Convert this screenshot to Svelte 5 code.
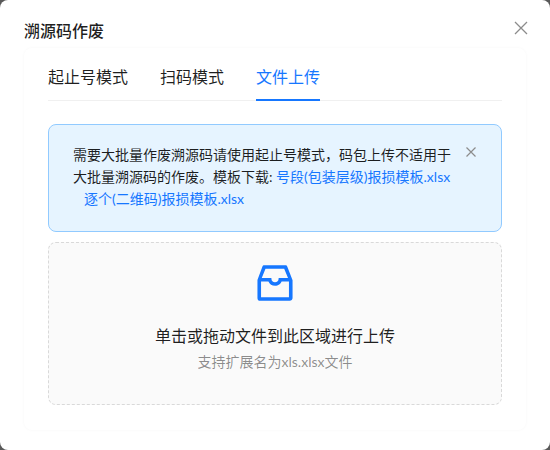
<script>
	let tabs = ['起止号模式', '扫码模式', '文件上传'];
	let active = $state(2);
	let showAlert = $state(true);
</script>

<div class="modal">
	<button class="close" aria-label="关闭">
		<svg viewBox="0 0 14 14" width="14" height="14"><path d="M1 1l12 12M13 1L1 13" /></svg>
	</button>
	<h2 class="title">溯源码作废</h2>
	<div class="card">
		<div class="tabs">
			{#each tabs as tab, i}
				<button class="tab" class:active={active === i} onclick={() => (active = i)}>{tab}</button>
			{/each}
		</div>

		{#if showAlert}
			<div class="alert">
				需要大批量作废溯源码请使用起止号模式，码包上传不适用于大批量溯源码的作废。模板下载:
				<a href="/#">号段(包装层级)报损模板.xlsx</a>
				<a class="second" href="/#">逐个(二维码)报损模板.xlsx</a>
				<button class="alertClose" aria-label="关闭提示" onclick={() => (showAlert = false)}>
					<svg viewBox="0 0 10 10" width="10" height="10"><path d="M.5.5l9 9M9.5.5l-9 9" /></svg>
				</button>
			</div>
		{/if}

		<div class="dragger">
			<svg class="inbox" viewBox="0 0 1024 1024" width="48" height="48">
				<path d="M885.2 446.3l-.2-.8-112.2-285.1c-5-16.1-19.9-27.2-36.8-27.2H281.2c-17 0-32.1 11.3-36.9 27.6L139.4 443l-.3.7-.2.8c-1.3 4.9-1.7 9.9-1 14.8-.1 1.6-.2 3.2-.2 4.8V830a60.9 60.9 0 0 0 60.8 60.8h627.2c33.5 0 60.8-27.3 60.9-60.8V464.1c0-1.3 0-2.6-.1-3.7.4-4.9 0-9.6-1.3-14.1zm-295.8-43l-.3 15.7c-.8 44.9-31.8 75.1-77.1 75.1-22.1 0-41.1-7.1-54.8-20.6S436 441.2 435.6 419l-.3-15.7H229.5L309 210h399.2l81.7 193.3H589.4zm-375 76.8h157.3c24.3 57.1 76 90.8 140.4 90.8 33.7 0 65-9.4 90.3-27.2 22.2-15.6 39.5-37.4 50.7-63.6h156.5V814H214.4V480.1z" />
			</svg>
			<p class="dragText">单击或拖动文件到此区域进行上传</p>
			<p class="dragHint">支持扩展名为xls.xlsx文件</p>
		</div>
	</div>
</div>

<style>
	:global(body) {
		margin: 0;
		background: #595959;
	}

	.modal {
		position: relative;
		box-sizing: border-box;
		width: 550px;
		height: 450px;
		padding: 19px 24px 20px;
		background: #fff;
		border-radius: 8px;
		font-family: Lato, "Noto Sans CJK SC", sans-serif;
		color: rgba(0, 0, 0, 0.88);
		overflow: hidden;
	}

	.title {
		margin: 0;
		font-size: 16px;
		font-weight: 500;
		line-height: 24px;
	}

	.close {
		position: absolute;
		top: 21px;
		right: 22px;
		display: flex;
		padding: 0;
		background: none;
		border: none;
		cursor: pointer;
	}

	.close path {
		fill: none;
		stroke: #8c8c8c;
		stroke-width: 1.3;
	}

	.card {
		box-sizing: border-box;
		height: 382px;
		margin-top: 5px;
		padding: 6px 24px 0;
		border-radius: 8px;
		box-shadow: 0 0 3px rgba(0, 0, 0, 0.04);
	}

	.tabs {
		display: flex;
		gap: 32px;
		border-bottom: 1px solid #f0f0f0;
		margin-bottom: 23px;
	}

	.tab {
		margin-bottom: -1px;
		padding: 11px 0 10px;
		background: none;
		border: none;
		border-bottom: 2px solid transparent;
		font: inherit;
		font-size: 16px;
		line-height: 24px;
		color: rgba(0, 0, 0, 0.88);
		cursor: pointer;
	}

	.tab.active {
		color: #1677ff;
		border-bottom-color: #1677ff;
	}

	.alert {
		position: relative;
		padding: 19px 48px 21px 24px;
		background: #e6f4ff;
		border: 1px solid #91caff;
		border-radius: 8px;
		font-size: 14px;
		line-height: 22px;
		margin-bottom: 10px;
	}

	.alert a {
		color: #1677ff;
		text-decoration: none;
	}

	.alert a.second {
		margin-left: 11px;
	}

	.alertClose {
		position: absolute;
		top: 22px;
		right: 25px;
		display: flex;
		padding: 0;
		background: none;
		border: none;
		cursor: pointer;
	}

	.alertClose path {
		fill: none;
		stroke: #8c8c8c;
		stroke-width: 1.2;
	}

	.dragger {
		display: flex;
		flex-direction: column;
		align-items: center;
		padding: 16px 0 31px;
		background: #fafafa;
		border: 1px dashed #d9d9d9;
		border-radius: 8px;
	}

	.inbox {
		display: block;
		fill: #1677ff;
		margin-bottom: 17px;
	}

	.dragText {
		margin: 0 0 3px;
		font-size: 16px;
		line-height: 24px;
	}

	.dragHint {
		margin: 0;
		font-size: 14px;
		line-height: 22px;
		color: rgba(0, 0, 0, 0.45);
	}
</style>
